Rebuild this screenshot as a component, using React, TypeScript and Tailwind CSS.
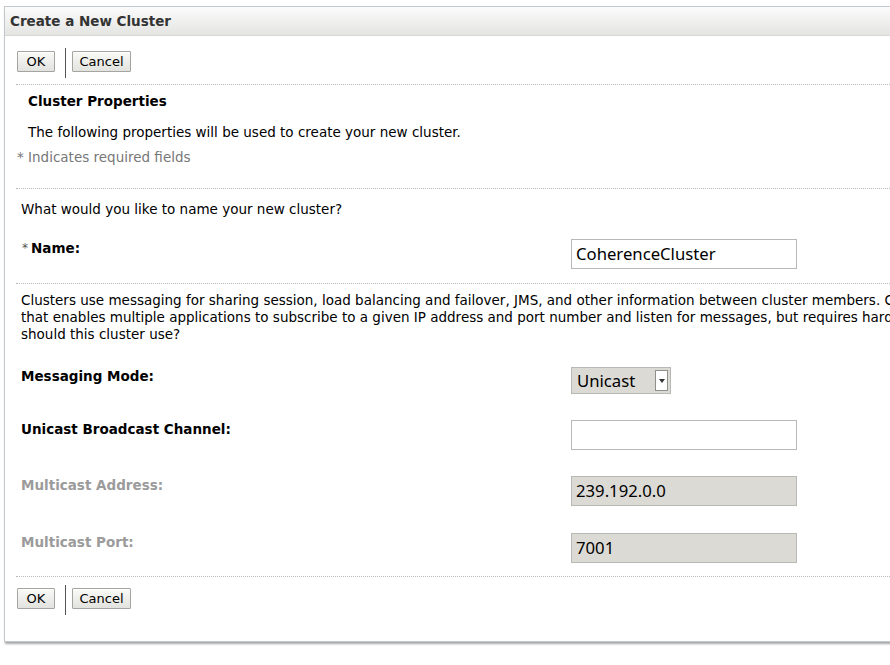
import React from "react";

const dotted = "border-t border-dotted border-[#b9b9b9]";

function Btn({ label, w }: { label: string; w: string }) {
  return (
    <button
      className={`mt-[3px] h-[21px] ${w} border border-[#a4a4a0] bg-gradient-to-b from-[#fafaf8] to-[#e2e2de] text-[13px] text-black leading-none rounded-[1px] shadow-[inset_0_1px_0_#fff]`}
    >
      {label}
    </button>
  );
}

function ButtonBar() {
  return (
    <div className="flex items-start h-[30px] pl-[12px]">
      <Btn label="OK" w="w-[38px]" />
      <div className="ml-[10px] mr-[6px] w-px h-[30px] bg-[#555]" />
      <Btn label="Cancel" w="w-[59px]" />
    </div>
  );
}

function Field({
  label,
  value,
  disabled,
  h,
}: {
  label: string;
  value: string;
  disabled?: boolean;
  h: string;
}) {
  return (
    <div className={`flex items-start ${h}`}>
      <div
        className={`w-[566px] pl-[16px] pt-[0.5px] leading-[17px] font-bold ${disabled ? "text-[#9b9b9b]" : "text-black"}`}
      >
        {label}
      </div>
      <div
        className={`w-[226px] h-[30px] border border-[#b8b8b4] px-[4px] flex items-center text-[16.7px] text-black font-['Noto_Sans',sans-serif] ${disabled ? "bg-[#dcdad5]" : "bg-white"}`}
      >
        {value}
      </div>
    </div>
  );
}

export default function App() {
  return (
    <div className="w-[890px] h-[665px] bg-white font-['DejaVu_Sans',sans-serif] text-[13.5px] text-[#222] pt-[6px] pl-[4px] overflow-hidden">
      <div className="w-[890px] h-[636px] border-l border-t border-b border-[#c3c8cc] shadow-[1px_2px_2px_rgba(0,0,0,0.35)] bg-white">
        <div className="h-[29px] bg-gradient-to-b from-[#fbfbfb] to-[#e4e5e3] border-b border-[#d6d8d6] flex items-center pl-[5px] font-bold text-[13.5px] text-[#333]">
          Create a New Cluster
        </div>

        <div className="pt-[12px]">
          <ButtonBar />
        </div>

        <div className={`ml-[11px] mt-[6px] ${dotted}`} />
        <div className="pl-[23px] pt-[8px] leading-[17px] font-bold text-black">Cluster Properties</div>
        <div className="pl-[23px] pt-[14px] leading-[17px] text-black">
          The following properties will be used to create your new cluster.
        </div>
        <div className="pl-[12px] pt-[8px] leading-[17px] text-[#777]">* Indicates required fields</div>

        <div className={`ml-[11px] mt-[22px] ${dotted}`} />
        <div className="pl-[16px] pt-[12px] leading-[17px] text-black">
          What would you like to name your new cluster?
        </div>

        <div className="mt-[21px] flex items-start">
          <div className="w-[566px] pl-[17px] pt-[0.5px] leading-[17px] font-bold text-black">
            <span className="font-normal text-[12px] text-[#555] mr-[3px] relative -top-[1px]">*</span>Name:
          </div>
          <div className="w-[226px] h-[30px] border border-[#b8b8b4] px-[4px] flex items-center text-[16.7px] text-black bg-white font-['Noto_Sans',sans-serif]">
            CoherenceCluster
          </div>
        </div>

        <div className={`ml-[11px] mt-[14px] ${dotted}`} />
        <div className="pl-[16px] pt-[8px] text-black leading-[17px] whitespace-nowrap overflow-hidden">
          Clusters use messaging for sharing session, load balancing and failover, JMS, and other information between cluster members. C
          <br />
          that enables multiple applications to subscribe to a given IP address and port number and listen for messages, but requires hardw
          <br />
          should this cluster use?
        </div>

        <div className="mt-[24px] flex items-start h-[53px]">
          <div className="w-[566px] pl-[16px] pt-[0.5px] leading-[17px] font-bold text-black">Messaging Mode:</div>
          <div className="w-[100px] h-[27px] border border-[#b8b8b4] bg-[#dcdad5] flex items-center pl-[5px] pr-[2px] text-[16.7px] text-black font-['Noto_Sans',sans-serif]">
            <span className="flex-1">Unicast</span>
            <span className="w-[13px] h-[21px] bg-white border border-[#8f8f8c] flex items-center justify-center">
              <svg width="6" height="4" viewBox="0 0 6 4">
                <path d="M0 0h6L3 4z" fill="#333" />
              </svg>
            </span>
          </div>
        </div>

        <Field label="Unicast Broadcast Channel:" value="" h="h-[56px]" />
        <Field label="Multicast Address:" value="239.192.0.0" disabled h="h-[57px]" />
        <Field label="Multicast Port:" value="7001" disabled h="h-[30px]" />

        <div className={`ml-[11px] mt-[13px] ${dotted}`} />
        <div className="pt-[8px]">
          <ButtonBar />
        </div>
      </div>
    </div>
  );
}
